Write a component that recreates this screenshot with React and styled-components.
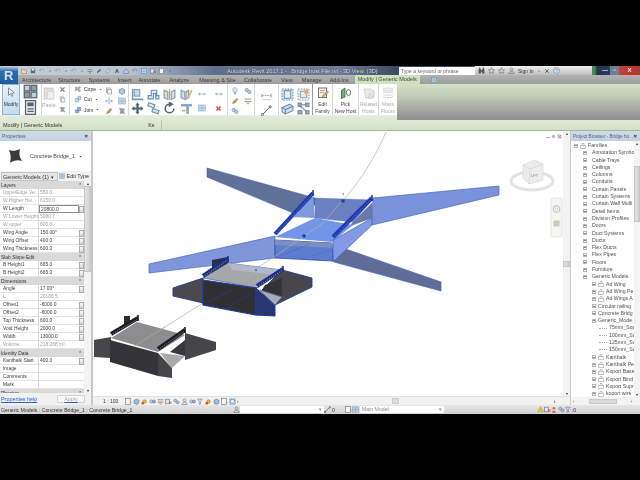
import React from 'react'
import styled, { createGlobalStyle } from 'styled-components'

const GlobalStyle = createGlobalStyle`
  html, body { margin: 0; background: #000; }
  * { box-sizing: border-box; }
`
const Screen = styled.div`
  width: 640px;
  height: 480px;
  overflow: hidden;
  background: #000;
  display: flex;
  flex-direction: column;
  font-family: 'Liberation Sans', Arial, sans-serif;
  font-size: 5.4px;
  color: #333;
  filter: blur(0.42px);
`
const TopBlack = styled.div`
  height: 66px;
  flex: none;
`
const TitleBar = styled.div`
  height: 9px;
  flex: none;
  display: flex;
  align-items: center;
  background: linear-gradient(90deg, #c6d0dc 0, #b7c3d2 130px, #5f708e 215px, #6b7d9b 340px, #3c4b63 397px);
`
const AppButton = styled.div`
  width: 18px;
  height: 18px;
  margin-bottom: -9px;
  position: relative;
  z-index: 2;
  flex: none;
  background: linear-gradient(#c4d0de, #2a6fb3 30%, #1d5d9e);
  color: #d6e4f2;
  font-weight: bold;
  font-size: 13px;
  line-height: 19px;
  padding-left: 4px;
`
const Qat = styled.div`
  display: flex;
  gap: 3px;
  align-items: center;
  padding-left: 3px;
  width: 200px;
  flex: none;
`
const WindowTitle = styled.div`
  width: 177px;
  flex: none;
  color: #e6e6e6;
  font-size: 5.6px;
  white-space: nowrap;
  text-shadow: 0 0 1px #111;
  padding-left: 9px;
`
const SearchBox = styled.div`
  width: 76px;
  height: 8px;
  margin-left: 4px;
  flex: none;
  background: #fff;
  color: #666;
  padding-left: 2px;
  line-height: 8px;
  font-size: 5px;
  white-space: nowrap;
  overflow: hidden;
`
const InfoCenter = styled.div`
  flex: 1;
  height: 9px;
  display: flex;
  align-items: center;
  gap: 3px;
  padding-left: 3px;
  background: linear-gradient(#efefef, #bdbdbd);
  font-size: 5px;
`
const WindowButtons = styled.div`
  width: 48px;
  height: 9px;
  flex: none;
  display: flex;
  align-items: center;
  background: linear-gradient(90deg, #4c8a52 0, #3d8a48 3px, #26324a 5px, #2f4468 26px);
`
const WinBtn = styled.div`
  width: ${({ $w }) => $w}px;
  height: 9px;
  flex: none;
  color: #fff;
  font-weight: bold;
  font-size: 6px;
  line-height: 9px;
  text-align: center;
  background: ${({ $bg }) => $bg};
`
const TabBar = styled.div`
  height: 9px;
  flex: none;
  display: flex;
  align-items: center;
  padding-left: 22px;
  background: linear-gradient(#b3b3b3, #9c9c9c);
`
const Tab = styled.div`
  white-space: nowrap;
  margin-right: ${({ $gap }) => $gap}px;
  color: #3b3b3b;
  font-size: 5.5px;
  ${({ $active }) =>
    $active &&
    `
    background: #cfe2bd;
    height: 9px;
    line-height: 9px;
    padding: 0 3px;
    border-radius: 1px 1px 0 0;
    color: #444;
  `}
`
const RibbonRow = styled.div`
  height: 36px;
  flex: none;
  display: flex;
  background: linear-gradient(#d3e1c5 0, #c3cfb8 30%, #a5a99f 70%, #8e8e8e 100%);
`
const Ribbon = styled.div`
  width: 397px;
  flex: none;
  display: flex;
  background: linear-gradient(#fff 0, #fff 86%, #e2ecd8 88%, #dfe9d5 100%);
  svg { opacity: 0.85; }
`
const Panel = styled.div`
  width: ${({ $w }) => $w}px;
  flex: none;
  height: 31px;
  display: flex;
  border-right: 1px solid ${({ $dark }) => ($dark ? '#9a9a9a' : '#d4d8d0')};
`
const ModifyButton = styled.div`
  width: 18px;
  height: 31px;
  margin-left: 2px;
  flex: none;
  background: linear-gradient(#e6f1fb, #c3dcf1);
  border: 1px solid #8fb4d6;
  display: flex;
  flex-direction: column;
  align-items: center;
  gap: 4px;
  padding-top: 2px;
  font-size: 5px;
  color: #333;
`
const StackColumn = styled.div`
  flex: ${({ $w }) => ($w ? `0 0 ${$w}px` : 1)};
  display: flex;
  flex-direction: column;
  align-items: center;
  justify-content: ${({ $justify }) => $justify || 'space-around'};
  padding: ${({ $pad }) => $pad || 0};
`
const PasteLabel = styled.span`
  color: #aaa;
  margin-top: 2px;
`
const LabelRow = styled.div`
  display: flex;
  align-items: center;
  gap: 2px;
  width: 100%;
  padding-left: 4px;
  white-space: nowrap;
  font-size: 5px;
`
const IconGrid = styled.div`
  display: grid;
  grid-template-columns: repeat(${({ $cols }) => $cols}, 1fr);
  grid-auto-rows: ${({ $row }) => $row}px;
  width: 100%;
  padding-top: ${({ $top }) => $top || 2}px;
  justify-items: center;
  align-items: center;
`
const BigTool = styled.div`
  flex: 1;
  height: 31px;
  display: flex;
  flex-direction: column;
  align-items: center;
  padding-top: 3px;
  gap: 2px;
  font-size: 5px;
  line-height: 6.5px;
  text-align: center;
  color: ${({ $off }) => ($off ? '#aaa' : '#444')};
`
const OptionsBar = styled.div`
  height: 11px;
  flex: none;
  display: flex;
  align-items: center;
  padding-left: 3px;
  background: linear-gradient(#dfe9d3, #d3e0c6);
  border-bottom: 1px solid #a9b3a0;
  font-size: 5.5px;
`
const OptionsValue = styled.span`
  margin-left: 86px;
  padding-right: 6px;
  border-right: 1px solid #b6c2a9;
  line-height: 10px;
`
const Workspace = styled.div`
  flex: none;
  height: 274px;
  display: flex;
  background: #fff;
`
const PropertiesPanel = styled.div`
  width: 93px;
  flex: none;
  display: flex;
  flex-direction: column;
  background: #f1f1f1;
  border-right: 2px solid #c8c8c8;
`
const PanelHeader = styled.div`
  height: 10px;
  flex: none;
  display: flex;
  align-items: center;
  justify-content: space-between;
  padding: 0 3px 0 2px;
  background: linear-gradient(#cfdbe8, #c3d2e2);
  color: #56667a;
  font-size: ${({ $size }) => $size || 5.2}px;
  white-space: nowrap;
  b { color: #222; font-size: 6px; }
`
const TypePreview = styled.div`
  height: 30px;
  flex: none;
  display: flex;
  align-items: center;
  background: #fff;
  padding-left: 3px;
  gap: 3px;
  color: #444;
  font-size: 5.4px;
`
const Swatch = styled.div`
  width: 24px;
  height: 24px;
  flex: none;
  display: flex;
  align-items: center;
  justify-content: center;
`
const SelectRow = styled.div`
  height: 10px;
  flex: none;
  display: flex;
  align-items: center;
  justify-content: space-between;
  padding: 0 2px 0 1px;
  background: #f2f2f2;
  font-size: 5.4px;
  color: #333;
`
const Combo = styled.div`
  width: 57px;
  height: 9px;
  line-height: 8px;
  background: #e6e6e6;
  border: 1px solid #c4c4c4;
  display: flex;
  justify-content: space-between;
  padding: 0 3px 0 1px;
  white-space: nowrap;
`
const TableArea = styled.div`
  height: 212px;
  flex: none;
  display: flex;
  overflow: hidden;
`
const Table = styled.div`
  width: 84px;
  flex: none;
  background: #fff;
  font-size: 4.9px;
`
const SectionRow = styled.div`
  height: 8px;
  background: #d9d9d9;
  display: flex;
  justify-content: space-between;
  align-items: center;
  padding: 0 2px 0 1px;
  color: #333;
`
const PropRow = styled.div`
  height: 8px;
  display: grid;
  grid-template-columns: 39px 40px 5px;
  align-items: center;
  border-bottom: 1px solid #e4e4e4;
  color: ${({ $muted }) => ($muted ? '#a2a2a2' : '#3c3c3c')};
  white-space: nowrap;
`
const PropLabel = styled.div`
  padding-left: 3px;
  height: 8px;
  line-height: 8px;
  border-right: 1px solid #d8d8d8;
`
const PropValue = styled.div`
  padding-left: 1px;
  height: 8px;
  line-height: 7px;
  ${({ $edit }) => $edit && 'border: 1px solid #8f8f8f; background: #fff;'}
`
const AssocBtn = styled.div`
  width: 5px;
  height: 7px;
  background: linear-gradient(#fafafa, #d6d6d6);
  border: 1px solid #adadad;
`
const VScroll = styled.div`
  width: ${({ $w }) => $w}px;
  flex: none;
  display: flex;
  flex-direction: column;
  justify-content: space-between;
  background: #f3f3f3;
  font-size: 4px;
  text-align: center;
  color: #333;
`
const ScrollThumb = styled.div`
  height: ${({ $h }) => $h}px;
  margin-top: ${({ $mt }) => $mt || 0}px;
  background: linear-gradient(90deg, #e4e4e4, #cfcfcf);
  border: 1px solid #c6c6c6;
`
const ScrollFill = styled.div`
  flex: 1;
`
const HelpRow = styled.div`
  height: 12px;
  flex: none;
  display: flex;
  justify-content: space-between;
  align-items: center;
  padding: 0 6px 0 1px;
  color: #2a62c4;
  text-decoration: underline;
`
const ApplyButton = styled.div`
  width: 28px;
  height: 8px;
  line-height: 7px;
  text-align: center;
  color: #a8a8a8;
  background: #f8f8f8;
  border: 1px solid #d2d2d2;
  border-radius: 1px;
`
const Viewport = styled.div`
  flex: 1;
  min-width: 0;
  display: flex;
  flex-direction: column;
`
const ViewportBody = styled.div`
  flex: 1;
  min-height: 0;
  display: flex;
`
const Scene = styled.svg`
  display: block;
  flex: none;
  width: 470px;
  height: 265px;
`
const ViewBar = styled.div`
  height: 9px;
  flex: none;
  display: flex;
  align-items: center;
  gap: 1px;
  padding: 0 6px 0 10px;
  background: #f1f1f1;
  font-size: 5px;
  border-top: 1px solid #e2e2e2;
`
const ScaleLabel = styled.span`
  width: 21px;
  flex: none;
`
const ViewThumb = styled.div`
  width: 7px;
  height: 6px;
  flex: none;
  margin: 0 154px 0 152px;
  background: #dcdcdc;
  border: 1px solid #cacaca;
`
const BrowserPanel = styled.div`
  width: 70px;
  flex: none;
  display: flex;
  flex-direction: column;
  background: #fff;
  border-left: 1px solid #c8c8c8;
`
const TreeArea = styled.div`
  height: 256px;
  flex: none;
  display: flex;
  overflow: hidden;
`
const Tree = styled.div`
  flex: 1;
  min-width: 0;
  padding-top: 1px;
  overflow: hidden;
`
const TREE_INDENT = [3, 12, 21, 28]
const TreeRow = styled.div`
  height: 7.3px;
  line-height: 7.3px;
  display: flex;
  align-items: center;
  gap: ${({ $level }) => ($level === 1 ? 5 : 2)}px;
  padding-left: ${({ $level }) => TREE_INDENT[$level]}px;
  white-space: nowrap;
  color: #505050;
  font-size: 5.2px;
`
const Expander = styled.span`
  width: 4px;
  height: 4px;
  flex: none;
  border: 1px solid #b5b5b5;
  background: #fff;
  position: relative;
  &::after {
    content: '';
    position: absolute;
    left: 0;
    right: 0;
    top: 0.5px;
    height: 1px;
    background: #8a8a8a;
  }
`
const TreeDots = styled.span`
  width: 8px;
  flex: none;
  border-bottom: 1px dotted #aaa;
`
const HScroll = styled.div`
  height: 8px;
  flex: none;
  display: flex;
  align-items: center;
  justify-content: space-between;
  padding: 0 8px 0 2px;
  background: #f3f3f3;
  font-size: 4px;
`
const HThumb = styled.div`
  width: 28px;
  height: 5px;
  background: #dcdcdc;
  border: 1px solid #c8c8c8;
`
const StatusBar = styled.div`
  height: 9px;
  flex: none;
  display: flex;
  align-items: center;
  padding-left: 1px;
  background: linear-gradient(#e6e6e6, #d2d2d2);
  font-size: 5.2px;
  color: #333;
  white-space: nowrap;
`
const StatusText = styled.div`
  width: 232px;
  flex: none;
`
const StatusCount = styled.span`
  margin: 0 10px 0 1px;
`
const StatusField = styled.div`
  width: ${({ $w }) => $w}px;
  height: 7px;
  flex: none;
  margin: 0 ${({ $mr }) => $mr || 0}px 0 ${({ $ml }) => $ml || 0}px;
  background: #fff;
  color: #8a8a8a;
  display: flex;
  justify-content: space-between;
  padding: 0 2px;
  line-height: 7px;
`
const IconSvg = styled.svg`
  flex: none;
  display: block;
  opacity: ${({ $muted }) => ($muted ? 0.7 : 1)};
`

const ICONS = {
  pointer: <path d="M3 1v9l2.4-2 1.6 3.4 1.3-.6L6.8 7.5 10 7z" fill="#fff" stroke="#5a6f8c" />,
  props: (
    <g stroke="#3d4a55" fill="#b9c6d4">
      <rect x="1" y="1" width="4.5" height="4.5" />
      <rect x="6.5" y="1" width="4.5" height="4.5" fill="#7b8a99" />
      <rect x="1" y="6.5" width="4.5" height="4.5" fill="#7b8a99" />
      <rect x="6.5" y="6.5" width="4.5" height="4.5" />
    </g>
  ),
  typeProps: (
    <g>
      <rect x="2" y="0.5" width="8" height="11" fill="#dfe6ee" stroke="#3e4b58" />
      <rect x="3.5" y="2" width="5" height="3" fill="#3e4b58" />
      <path d="M3.5 7h5M3.5 9h5" stroke="#3e4b58" />
    </g>
  ),
  paste: (
    <g>
      <rect x="2" y="1" width="8" height="10" fill="#dcdcdc" stroke="#c2c2c2" />
      <rect x="5" y="4" width="6" height="7" fill="#efefef" stroke="#cfcfcf" />
    </g>
  ),
  cross: <path d="M2.5 2.5l7 7M9.5 2.5l-7 7" stroke="#5f6870" strokeWidth="2" />,
  redCross: <path d="M2.5 2.5l7 7M9.5 2.5l-7 7" stroke="#d6322a" strokeWidth="2.6" />,
  copy: (
    <g fill="#e9eef3" stroke="#7c8a96">
      <rect x="2" y="1.5" width="6" height="7" />
      <rect x="4" y="3.5" width="6" height="7" />
    </g>
  ),
  brush: <path d="M2 2l8 1-2 3 2 4-4-1-3 1 1-4z" fill="#8a8f96" stroke="#5b5f64" strokeWidth=".6" />,
  cope: <path d="M2 3l4 1 3-2 1 2-3 2 3 3-2 1-3-3-3 2z" fill="#9aa6b2" stroke="#5b6670" strokeWidth=".6" />,
  cut: <path d="M2 5h5v5H2zM6 2h4v5H6z" fill="#c6d8ea" stroke="#6c8aa8" />,
  join: <path d="M2 6h5v4H2zM5 2h5v5H5z" fill="#7fa6cf" stroke="#4e78a4" />,
  align: (
    <g>
      <path d="M1.5 1v10M1.5 10.5h10" stroke="#4f87b8" strokeWidth="1.4" />
      <rect x="3" y="1.5" width="5" height="6" fill="#bed2e6" stroke="#6d8fae" />
    </g>
  ),
  offset: <path d="M1 10V7h3V2h5v5h2v3h-3V5H6v5z" fill="#d6e3ef" stroke="#4f7da8" />,
  mirror: (
    <g stroke="#6b879f" fill="#c9d8e6">
      <path d="M1 2l3.5 1.5v7L1 9z" />
      <path d="M11 2L7.5 3.5v7L11 9z" />
      <path d="M6 1v10" stroke="#d88d2e" />
    </g>
  ),
  mirrorDraw: (
    <g stroke="#6b879f" fill="#c9d8e6">
      <path d="M1 2l3.5 1.5v7L1 9z" />
      <path d="M8 2L5.5 3.5v7L8 9z" />
      <path d="M11 2L7 10" stroke="#d8a82e" strokeWidth="1.4" />
    </g>
  ),
  move: <path d="M6 .5L8 3H7v2h2V4l2.5 2L9 8V7H7v2h1l-2 2.5L4 9h1V7H3v1L.5 6 3 4v1h2V3H4z" fill="#33475a" />,
  copyShape: (
    <g fill="#d6e3ef" stroke="#4f7da8">
      <rect x="1" y="1.5" width="6" height="3" transform="rotate(20 4 3)" />
      <rect x="5" y="7" width="6" height="3" transform="rotate(20 8 8)" />
    </g>
  ),
  rotate: <path d="M6 2a4 4 0 1 0 4 4M6 .5v3L8.5 2z" fill="none" stroke="#33475a" strokeWidth="1.4" />,
  trim: (
    <g>
      <path d="M1 3h10" stroke="#6f99c0" strokeWidth="2.4" />
      <path d="M7 3v8" stroke="#6f99c0" strokeWidth="2.4" />
      <path d="M2 8h3" stroke="#d09233" strokeWidth="1.4" />
    </g>
  ),
  arrows: <path d="M1 6h10M3 4L1 6l2 2M9 4l2 2-2 2" fill="none" stroke="#4f87b8" />,
  gridBlue: (
    <g fill="#bcd3e8" stroke="#6d93b5" strokeWidth=".8">
      <rect x="1" y="1.5" width="10" height="9" />
      <path d="M1 6h10M6 1.5v9" />
    </g>
  ),
  split: <path d="M1 6h3M8 6h3M6 1v10M2.5 4L1 6l1.5 2M9.5 4L11 6 9.5 8" fill="none" stroke="#4a6e90" />,
  bulb: (
    <g>
      <circle cx="6" cy="4.5" r="3.5" fill="#cfe4f5" stroke="#6f9dc2" />
      <rect x="4.5" y="8" width="3" height="3" fill="#8a99a6" />
    </g>
  ),
  paint: <path d="M2 10l2-4 5-4 1.5 1.5-4 5z" fill="#c58a3c" stroke="#7a5326" strokeWidth=".6" />,
  link: (
    <g fill="#b5c8da" stroke="#587a9a">
      <circle cx="4" cy="4.5" r="2.5" />
      <circle cx="8" cy="7.5" r="2.5" />
    </g>
  ),
  bars: (
    <g stroke="#4b5b6a">
      <path d="M1 3h10" />
      <path d="M1 7h10" stroke="#c46a3a" strokeWidth="1.6" />
      <path d="M4 10h4" />
    </g>
  ),
  dim: (
    <g stroke="#7d8994">
      <path d="M1 3v4M11 3v4" />
      <path d="M1 5h10" strokeDasharray="2 1" />
      <path d="M1 9.5h10" stroke="#bfc6cc" />
    </g>
  ),
  angle: (
    <g stroke="#39424a">
      <path d="M1 11L10 2" />
      <circle cx="1.5" cy="10.5" r="1.2" fill="#fff" />
      <circle cx="10" cy="2" r="1.2" fill="#fff" />
    </g>
  ),
  boxWire: (
    <g stroke="#4f7da8" fill="#e3edf6">
      <rect x="1" y="1" width="10" height="10" strokeDasharray="1.5 1" />
      <rect x="3" y="2.5" width="6" height="7" />
    </g>
  ),
  boxPaint: (
    <g>
      <rect x="1" y="1" width="10" height="10" fill="none" stroke="#7c8a96" strokeDasharray="1.5 1" />
      <rect x="3" y="3" width="6" height="6" fill="#dfe9f2" stroke="#6d8fae" />
      <circle cx="8.5" cy="3.5" r="2" fill="#e39b3c" />
    </g>
  ),
  cylinder: (
    <g stroke="#4f7da8" fill="#c8dbec">
      <path d="M1 5l7-3 3 2-7 3zM1 5v4l3 2V7zM4 7v4l7-3V4z" />
    </g>
  ),
  nodes: (
    <g stroke="#5a6f8c" fill="#88a8c8">
      <rect x="1" y="1" width="3" height="3" />
      <rect x="8" y="1" width="3" height="3" />
      <rect x="1" y="8" width="3.5" height="3" />
      <rect x="8" y="8" width="3" height="3" fill="#d8a23c" />
      <path d="M4 2.5h4M3 4l5 4" fill="none" />
    </g>
  ),
  family: (
    <g>
      <rect x="1.5" y="1" width="8" height="9.5" fill="#f4efe2" stroke="#5f5f5f" />
      <path d="M3 3.5h5M3 5.5h4" stroke="#9a9a9a" />
      <path d="M5 11l1-3 4.5-4 1 1.2L7 9.5z" fill="#d6a23c" stroke="#7c5b20" strokeWidth=".5" />
    </g>
  ),
  host: (
    <g>
      <path d="M1.5 3.5L5 1v9l-3.5 1.500z" fill="#5aa35a" stroke="#2f6d33" />
      <ellipse cx="8.5" cy="5.5" rx="2.2" ry="3" fill="#fff" stroke="#555" />
    </g>
  ),
  hostOff: (
    <g fill="#e6e6e6" stroke="#cacaca">
      <path d="M1 2h7l3 2v6l-3 1H3z" />
      <path d="M7 6l3 5H5z" />
    </g>
  ),
  massOff: (
    <g fill="#efefef" stroke="#cacaca">
      <ellipse cx="6" cy="2.5" rx="5" ry="1.6" />
      <path d="M1 4.5c1 1.6 9 1.6 10 0M1 7c1 1.6 9 1.6 10 0M1 9.5c1 1.6 9 1.6 10 0" fill="none" />
    </g>
  ),
  open: <path d="M1 3h4l1 1h5v7H1z" fill="#e9d9a8" stroke="#8a7a48" />,
  familyNode: (
    <g fill="none" stroke="#8a8a8a">
      <path d="M1 11V5h3V1h4v4h3v6z" />
      <path d="M4 5h4" />
    </g>
  ),
  save: (
    <g>
      <rect x="1.5" y="1.5" width="9" height="9" fill="#5c6f86" />
      <rect x="3.5" y="2" width="5" height="3" fill="#e8edf2" />
    </g>
  ),
  undo: <path d="M2 6a4 4 0 0 1 8 0M2 6l-1-2.5M2 6l2.500-.8" fill="none" stroke="#5c6f86" />,
  text: <text x="2" y="10" fontSize="11" fontWeight="bold" fill="#2f3a45" fontFamily="Liberation Sans">A</text>,
  pencil: <path d="M2 10l1-3 5-5 2 2-5 5z" fill="#4d5a67" />,
  ruler: <path d="M1 8l7-7 3 3-7 7z" fill="#d9d9d9" stroke="#5c6f86" />,
  sky: <path d="M1 6l5-4 5 4v5H1z" fill="#a9c8e4" stroke="#5c6f86" />,
  thin: (
    <g>
      <rect x="1" y="1" width="10" height="10" fill="#dce9f6" stroke="#3f79c0" />
      <path d="M3 4h6M3 6h6M3 8h6" stroke="#3f79c0" />
    </g>
  ),
  closeDoc: (
    <g>
      <rect x="1" y="2" width="7" height="8" fill="#dfe6ee" stroke="#5c6f86" />
      <path d="M7 6l4 4M11 6l-4 4" stroke="#cc3a30" strokeWidth="1.4" />
    </g>
  ),
  sheet: (
    <g>
      <rect x="1" y="1" width="8" height="10" fill="#f3f3f3" stroke="#5c6f86" />
      <path d="M9 6l2 2-2 2" fill="none" stroke="#c67a2a" />
    </g>
  ),
  binoc: <path d="M1 4h4v7H1zM7 4h4v7H7zM2 1h2v3H2zM8 1h2v3H8zM5 5h2v3H5z" fill="#4b5660" />,
  star: <path d="M6 1l1.5 3.6 3.8.3-2.9 2.5.9 3.7L6 9.2l-3.3 1.9.9-3.7L.7 4.9l3.8-.3z" fill="none" stroke="#5c6670" />,
  user: <path d="M6 1.5a2.4 2.4 0 1 1-.01 0M1.5 11c.6-3 2.4-4 4.5-4s3.9 1 4.5 4z" fill="none" stroke="#5c6670" />,
  help: (
    <g>
      <circle cx="6" cy="6" r="5" fill="#dbe6f2" stroke="#4d78a8" />
      <text x="3.8" y="9" fontSize="7.5" fontFamily="Liberation Sans" fill="#2e5684">?</text>
    </g>
  ),
  arrowDown: <path d="M3.5 5h5L6 8z" fill="#333" />,
  cube: (
    <g stroke="#486a8c" fill="#9cc0e0">
      <path d="M2 4l4-2 4 2v5l-4 2-4-2z" />
    </g>
  ),
  sun: (
    <g>
      <circle cx="6" cy="6" r="3" fill="#f0b52e" stroke="#b7741a" />
      <rect x="1" y="7" width="4" height="4" fill="#d24a36" />
    </g>
  ),
  glasses: (
    <g stroke="#5a6f8c" fill="#c6d8ea">
      <circle cx="4" cy="6" r="2.6" />
      <circle cx="8.5" cy="6" r="2.6" fill="#9eb4c9" />
    </g>
  ),
  filter: <path d="M1 2h8L6 6v4L4 11V6z" fill="none" stroke="#5a6f8c" />,
  warn: <path d="M6 1l5 9H1z" fill="#e7c33c" stroke="#a68420" strokeWidth=".6" />,
  peopleRed: (
    <g>
      <circle cx="5" cy="4" r="2.5" fill="#d97a2e" />
      <path d="M2 11c0-3 6-3 6 0z" fill="#c64a34" />
    </g>
  ),
}

const Icon = ({ name, size = 10, muted }) => (
  <IconSvg width={size} height={size} viewBox="0 0 12 12" $muted={muted}>
    {ICONS[name]}
  </IconSvg>
)

const SmallLabel = ({ name, children }) => (
  <LabelRow>
    <Icon name={name} size={8} />
    {children}
    <Icon name="arrowDown" size={5} />
  </LabelRow>
)

const TABS = [
  ['Architecture', 7],
  ['Structure', 8],
  ['Systems', 8],
  ['Insert', 7],
  ['Annotate', 9],
  ['Analyze', 10],
  ['Massing & Site', 8],
  ['Collaborate', 9],
  ['View', 9],
  ['Manage', 8],
  ['Add-Ins', 6],
]

const PROPS = [
  { section: 'Layers' },
  { label: 'UpperEdge Ve...', value: '550.0', muted: true },
  { label: 'W Higher Hei...', value: '6150.0', muted: true },
  { label: 'W Length', value: '20800.0', edit: true, btn: true },
  { label: 'W Lower Height', value: '5080.7', muted: true },
  { label: 'W upper', value: '600.0', muted: true },
  { label: 'Wing Angle', value: '150.00°', btn: true },
  { label: 'Wing Offset', value: '400.0', btn: true },
  { label: 'Wing Thickness', value: '600.0', btn: true },
  { section: 'Slab Slope Edit' },
  { label: 'B Height1', value: '665.0', btn: true },
  { label: 'B Height2', value: '665.0', btn: true },
  { section: 'Dimensions' },
  { label: 'Angle', value: '17.00°', btn: true },
  { label: 'L', value: '20186.5', muted: true },
  { label: 'Offset1', value: '-6000.0', btn: true },
  { label: 'Offset2', value: '-6000.0', btn: true },
  { label: 'Top Thickness', value: '600.0', btn: true },
  { label: 'Void Height', value: '2000.0', btn: true },
  { label: 'Width', value: '13000.0', btn: true },
  { label: 'Volume', value: '218.288 m³', muted: true },
  { section: 'Identity Data' },
  { label: 'Kantbalk Start', value: '400.0', btn: true },
  { label: 'Image', value: '' },
  { label: 'Comments', value: '' },
  { label: 'Mark', value: '' },
  { section: 'Phasing' },
]

const BROWSER = [
  { level: 0, text: 'Families', family: true },
  ...[
    'Annotation Symbo',
    'Cable Trays',
    'Ceilings',
    'Columns',
    'Conduits',
    'Curtain Panels',
    'Curtain Systems',
    'Curtain Wall Mulli',
    'Detail Items',
    'Division Profiles',
    'Doors',
    'Duct Systems',
    'Ducts',
    'Flex Ducts',
    'Flex Pipes',
    'Floors',
    'Furniture',
    'Generic Models',
  ].map((text) => ({ level: 1, text })),
  { level: 2, text: 'Ad Wing', family: true },
  { level: 2, text: 'Ad Wing Pe', family: true },
  { level: 2, text: 'Ad Wings A', family: true },
  { level: 2, text: 'Circular railing' },
  { level: 2, text: 'Concrete Bridg' },
  { level: 2, text: 'Generic_Mode' },
  { level: 3, text: '75mm_Squ', leaf: true },
  { level: 3, text: '100mm_Sq', leaf: true },
  { level: 3, text: '125mm_Sq', leaf: true },
  { level: 3, text: '150mm_Sq', leaf: true },
  { level: 2, text: 'Kantbalk', family: true },
  { level: 2, text: 'Kantbalk Pe', family: true },
  { level: 2, text: 'Koport Base', family: true },
  { level: 2, text: 'Koport Bind', family: true },
  { level: 2, text: 'Koport Supr', family: true },
  { level: 2, text: 'koport wire', family: true },
]

const VIEW_ICONS = ['sheet', 'cube', 'sun', 'glasses', 'bars', 'closeDoc', 'link', 'user', 'glasses', 'filter', 'sun', 'cube', 'sheet', 'boxWire']

// railing along a bridge edge: solid band with light ticks on top
const Rail = ({ x1, y1, x2, y2, color, tick = '#7f95dc' }) => (
  <g>
    <line x1={x1} y1={y1} x2={x2} y2={y2} stroke={color} strokeWidth="4" />
    <line x1={x1} y1={y1 + 0.8} x2={x2} y2={y2 + 0.8} stroke={tick} strokeWidth="0.8" strokeDasharray="1 1.4" />
    <line x1={x2} y1={y2 - 3} x2={x2} y2={y2 + 3} stroke={color} strokeWidth="1.6" />
  </g>
)

const BridgeScene = () => (
  <Scene viewBox="93 131 470 265">
    <rect x="93" y="131" width="470" height="265" fill="#fff" />

    {/* upper selected bridge */}
    <polygon points="207,168 315,198 315,205 293,213 207,177" fill="#5f7099" stroke="#4a62b4" strokeWidth=".6" />
    <polygon points="149,264 275,236 275,258 149,273" fill="#7f96da" stroke="#4a66c4" strokeWidth=".7" />
    <polygon points="373,198 499,186 499,195 372,225" fill="#7a92da" stroke="#4a66c4" strokeWidth=".7" />
    <polygon points="337,246 441,282 441,291 334,262" fill="#5f6d96" stroke="#4a66c4" strokeWidth=".7" />
    <polygon points="315,198 372,200 353,222 315,218" fill="#6a80c0" stroke="#5a76cc" strokeWidth=".5" />
    <polygon points="353,222 372,203 372,218 350,226" fill="#6a7aa8" stroke="#4a66c4" strokeWidth=".4" />
    <polygon points="275,237 313,196 315,218 292,217" fill="#8098dc" />
    <polygon points="275,237 315,218 353,225 332,242" fill="#7295ea" />
    <polygon points="333,240 372,218 372,225 333,262" fill="#829ae4" stroke="#3a58b8" strokeWidth=".6" />
    <polygon points="275,240 332,243 333,261 275,258" fill="#5e7cd0" stroke="#2c47a8" strokeWidth=".8" />
    <polygon points="275,240 332,243 332,248 275,245" fill="#7c8ec0" />
    <path d="M275,258 L310,244 M300,259 L333,250" stroke="#4a68c0" strokeWidth=".5" />
    <Rail x1={275} y1={234} x2={313} y2={193} color="#1f3ab0" />
    <Rail x1={333} y1={237} x2={372} y2={198} color="#1f3ab0" />

    {/* axis curve */}
    <path d="M133,347 L200,305 L277,255 L323,223 L343,200 C360,182 376,156 386,132" fill="none" stroke="#a6b8a0" strokeWidth=".7" />

    {/* middle bridge */}
    <polygon points="212,260 228,257 228,266 212,275" fill="#24304c" />
    <polygon points="173,288 203,278 203,303 173,296" fill="#4a4a4e" stroke="#233a9c" strokeWidth=".9" />
    <polygon points="282,270 312,278 312,287 275,305 262,290" fill="#47474b" stroke="#233a9c" strokeWidth=".9" />
    <polygon points="203,278 228,263 282,270 257,288" fill="#a6a7ab" stroke="#3a52a8" strokeWidth=".6" />
    <polygon points="228,263 282,270 278,275 232,270" fill="#b2b9cc" />
    <polygon points="203,280 256,288 256,315 203,305" fill="#303034" stroke="#1f3aa0" strokeWidth="1.2" />
    <path d="M203,305 L232,290 M225,310 L252,292" stroke="#24409c" strokeWidth=".6" />
    <polygon points="256,288 275,305 275,316 256,315" fill="#2a3670" stroke="#1f3aa0" strokeWidth="1" />
    <polygon points="260,290 282,297 275,305" fill="#a7aab8" stroke="#3a52a8" strokeWidth=".5" />
    <polygon points="265,285 282,278 282,296 262,290" fill="#333336" />
    <Rail x1={203} y1={276} x2={228} y2={259} color="#1c2f80" tick="#b8c0dc" />
    <Rail x1={257} y1={286} x2={283} y2={269} color="#1c2f80" tick="#b8c0dc" />

    {/* lower bridge */}
    <polygon points="94,340 111,337 111,358 94,357" fill="#47474a" />
    <polygon points="185,333 216,342 216,350 185,360" fill="#45454a" />
    <polygon points="111,338 137,322 185,335 158,352" fill="#8d8d8f" />
    <polygon points="110,340 158,353 158,376 110,362" fill="#343436" />
    <polygon points="158,353 172,368 172,378 158,376" fill="#454547" />
    <polygon points="160,353 185,356 172,368" fill="#a9a9aa" />
    <polygon points="185,340 185,356 170,352" fill="#38383a" />
    <rect x="124" y="316" width="6" height="9" fill="#2a2a2c" />
    <Rail x1={111} y1={334} x2={138} y2={318} color="#1c1c20" tick="#bdbdbd" />
    <Rail x1={158} y1={349} x2={185} y2={330} color="#1c1c20" tick="#bdbdbd" />
    <line x1="133" y1="347" x2="165" y2="327" stroke="#a6b8a0" strokeWidth=".6" />

    {/* grips */}
    <circle cx="343" cy="201" r="1.8" fill="#1f3aa0" />
    <circle cx="304" cy="236" r="1.8" fill="#1f3aa0" />
    <circle cx="256" cy="270" r="1.2" fill="#5a78d0" />
    <text x="342" y="196" fontSize="4" fill="#444" fontFamily="Liberation Sans">?</text>

    {/* view cube */}
    <ellipse cx="532" cy="181" rx="21" ry="9" fill="none" stroke="#e2e2e2" strokeWidth="3" />
    <polygon points="523,165 535,160 543,164 543,180 529,184 523,178" fill="#ececec" stroke="#c9c9c9" strokeWidth=".5" />
    <path d="M523,165 L530,169 L543,164 M530,169 L529,184" fill="none" stroke="#c6c6c6" strokeWidth=".5" />
    <text x="531" y="177" fontSize="4" fill="#888" fontFamily="Liberation Sans">LFT</text>

    {/* navigation bar */}
    <rect x="551" y="198" width="11" height="39" rx="1.5" fill="#f4f6f0" stroke="#dcdcdc" strokeWidth=".7" />
    <circle cx="556.5" cy="209" r="3.4" fill="none" stroke="#bdbdbd" strokeWidth="1" />
    <circle cx="556.5" cy="209" r="1.4" fill="none" stroke="#c8c8c8" strokeWidth=".7" />
    <rect x="554" y="221" width="5" height="5" fill="#c7d5bf" stroke="#9eb094" strokeWidth=".5" />

    {/* viewport window controls */}
    <path d="M546,137.5h4" stroke="#999" strokeWidth=".8" />
    <circle cx="553.5" cy="136.5" r="1.8" fill="#bbb" />
    <path d="M558,135h3v3h-3zM558,135l3,3M561,135l-3,3" fill="none" stroke="#888" strokeWidth=".6" />
  </Scene>
)

const App = () => (
  <Screen>
    <GlobalStyle />
    <TopBlack />
    <TitleBar>
      <AppButton>R</AppButton>
      <Qat>
        <Icon name="open" size={6} />
        <Icon name="save" size={6} />
        <Icon name="undo" size={6} muted />
        <Icon name="arrowDown" size={4} />
        <Icon name="undo" size={6} muted />
        <Icon name="arrowDown" size={4} />
        <Icon name="undo" size={6} muted />
        <Icon name="arrowDown" size={4} />
        <Icon name="bars" size={6} />
        <Icon name="pencil" size={6} />
        <Icon name="ruler" size={6} />
        <Icon name="text" size={6} />
        <Icon name="sky" size={6} />
        <Icon name="undo" size={6} />
        <Icon name="thin" size={6} />
        <Icon name="closeDoc" size={6} />
        <Icon name="sheet" size={6} />
        <Icon name="arrowDown" size={4} />
      </Qat>
      <WindowTitle>Autodesk Revit 2017.1 -&nbsp;&nbsp; Bridge host File.rvt - 3D View: {'{3D}'}</WindowTitle>
      <SearchBox>Type a keyword or phrase</SearchBox>
      <InfoCenter>
        <Icon name="binoc" size={7} />
        <Icon name="star" size={7} />
        <Icon name="star" size={7} />
        <Icon name="user" size={7} />
        <span>Sign In</span>
        <Icon name="arrowDown" size={4} />
        <Icon name="cross" size={6} />
        <Icon name="help" size={7} />
      </InfoCenter>
      <WindowButtons>
        <WinBtn $w={8} $bg="transparent" />
        <WinBtn $w={10} $bg="transparent">—</WinBtn>
        <WinBtn $w={9} $bg="#6b7f9a">▫</WinBtn>
        <WinBtn $w={21} $bg="linear-gradient(90deg,#b84640,#c9322a,#a83a36)">X</WinBtn>
      </WindowButtons>
    </TitleBar>
    <TabBar>
      {TABS.map(([name, gap]) => (
        <Tab key={name} $gap={gap}>{name}</Tab>
      ))}
      <Tab $active $gap={11}>Modify | Generic Models</Tab>
      <Icon name="thin" size={6} muted />
    </TabBar>
    <RibbonRow>
      <Ribbon>
        <Panel $w={42}>
          <ModifyButton>
            <Icon name="pointer" size={10} />
            Modify
          </ModifyButton>
          <StackColumn>
            <Icon name="props" size={15} />
            <Icon name="typeProps" size={15} />
          </StackColumn>
        </Panel>
        <Panel $w={28}>
          <StackColumn $justify="flex-start" $pad="3px 0 0">
            <Icon name="paste" size={13} muted />
            <PasteLabel>Paste</PasteLabel>
          </StackColumn>
          <StackColumn>
            <Icon name="cross" size={7} />
            <Icon name="copy" size={7} />
            <Icon name="brush" size={7} />
          </StackColumn>
        </Panel>
        <Panel $w={59}>
          <StackColumn $w={32}>
            <SmallLabel name="cope">Cope</SmallLabel>
            <SmallLabel name="cut">Cut</SmallLabel>
            <SmallLabel name="join">Join</SmallLabel>
          </StackColumn>
          <IconGrid $cols={2} $row={10}>
            <Icon name="copy" size={8} muted />
            <Icon name="cube" size={8} />
            <Icon name="split" size={8} />
            <Icon name="gridBlue" size={8} />
            <Icon name="paint" size={8} />
            <Icon name="brush" size={8} />
          </IconGrid>
        </Panel>
        <Panel $w={99}>
          <IconGrid $cols={6} $row={14} $top={3}>
            <Icon name="align" size={13} />
            <Icon name="offset" size={13} />
            <Icon name="mirror" size={13} />
            <Icon name="mirrorDraw" size={13} />
            <Icon name="arrows" size={8} />
            <Icon name="arrows" size={8} />
            <Icon name="move" size={13} />
            <Icon name="copyShape" size={13} />
            <Icon name="rotate" size={13} />
            <Icon name="trim" size={13} />
            <Icon name="gridBlue" size={8} />
            <Icon name="redCross" size={7} />
          </IconGrid>
        </Panel>
        <Panel $w={27}>
          <IconGrid $cols={2} $row={10}>
            <Icon name="bulb" size={8} />
            <Icon name="link" size={8} />
            <Icon name="paint" size={8} />
            <Icon name="bars" size={8} />
            <Icon name="link" size={8} />
            <span />
          </IconGrid>
        </Panel>
        <Panel $w={24}>
          <IconGrid $cols={1} $row={14} $top={5}>
            <Icon name="dim" size={11} />
            <Icon name="angle" size={11} />
          </IconGrid>
        </Panel>
        <Panel $w={34} $dark>
          <IconGrid $cols={2} $row={14} $top={3}>
            <Icon name="boxWire" size={13} />
            <Icon name="boxPaint" size={13} />
            <Icon name="cylinder" size={13} />
            <Icon name="nodes" size={13} />
          </IconGrid>
        </Panel>
        <Panel $w={20}>
          <BigTool>
            <Icon name="family" size={12} />
            <span>Edit<br />Family</span>
          </BigTool>
        </Panel>
        <Panel $w={26}>
          <BigTool>
            <Icon name="host" size={12} />
            <span>Pick<br />New Host</span>
          </BigTool>
        </Panel>
        <Panel $w={20}>
          <BigTool $off>
            <Icon name="hostOff" size={12} />
            <span>Related<br />Hosts</span>
          </BigTool>
        </Panel>
        <BigTool $off>
          <Icon name="massOff" size={12} />
          <span>Mass<br />Floors</span>
        </BigTool>
      </Ribbon>
    </RibbonRow>
    <OptionsBar>
      Modify | Generic Models
      <OptionsValue>Ks</OptionsValue>
    </OptionsBar>
    <Workspace>
      <PropertiesPanel>
        <PanelHeader>
          Properties
          <b>×</b>
        </PanelHeader>
        <TypePreview>
          <Swatch>
            <svg width="16" height="16" viewBox="0 0 16 16">
              <path d="M2 2c3 1.4 7 1 11-1-1 4-1 7 2 12-4-1.500-8-1-12 2 1-4 1-9-1-13z" fill="#3a3a3a" />
            </svg>
          </Swatch>
          Concrete Bridge_1
          <Icon name="arrowDown" size={5} />
        </TypePreview>
        <SelectRow>
          <Combo>
            Generic Models (1)
            <span>▾</span>
          </Combo>
          <Icon name="gridBlue" size={6} />
          Edit Type
        </SelectRow>
        <TableArea>
          <Table>
            {PROPS.map((row) =>
              row.section ? (
                <SectionRow key={row.section}>
                  {row.section}
                  <span>⌃</span>
                </SectionRow>
              ) : (
                <PropRow key={row.label} $muted={row.muted}>
                  <PropLabel>{row.label}</PropLabel>
                  <PropValue $edit={row.edit}>{row.value}</PropValue>
                  {row.btn ? <AssocBtn /> : <span />}
                </PropRow>
              ),
            )}
          </Table>
          <VScroll $w={7}>
            <div>▴</div>
            <ScrollThumb $h={86} />
            <ScrollFill />
            <div>▾</div>
          </VScroll>
        </TableArea>
        <HelpRow>
          Properties help
          <ApplyButton>Apply</ApplyButton>
        </HelpRow>
      </PropertiesPanel>
      <Viewport>
        <ViewportBody>
          <BridgeScene />
          <VScroll $w={7}>
            <div>▴</div>
            <ScrollThumb $h={6} />
            <div>▾</div>
          </VScroll>
        </ViewportBody>
        <ViewBar>
          <ScaleLabel>1 : 100</ScaleLabel>
          {VIEW_ICONS.map((name, i) => (
            <Icon key={i} name={name} size={7} />
          ))}
          <span>‹</span>
          <ViewThumb />
          <span>›</span>
        </ViewBar>
      </Viewport>
      <BrowserPanel>
        <PanelHeader $size={4.6}>
          Project Browser - Bridge ho...
          <b>×</b>
        </PanelHeader>
        <TreeArea>
          <Tree>
            {BROWSER.map((row) => (
              <TreeRow key={row.text} $level={row.level}>
                {row.leaf ? <TreeDots /> : <Expander />}
                {row.family && <Icon name="familyNode" size={6} />}
                {row.text}
              </TreeRow>
            ))}
          </Tree>
          <VScroll $w={6}>
            <div>▴</div>
            <ScrollThumb $h={56} $mt={20} />
            <ScrollFill />
            <div>▾</div>
          </VScroll>
        </TreeArea>
        <HScroll>
          <span>‹</span>
          <HThumb />
          <span>›</span>
        </HScroll>
      </BrowserPanel>
    </Workspace>
    <StatusBar>
      <StatusText>Generic Models : Concrete Bridge_1 : Concrete Bridge_1</StatusText>
      <Icon name="user" size={7} />
      <StatusField $w={84}>
        <span />
        <span>▾</span>
      </StatusField>
      <Icon name="angle" size={7} />
      <StatusCount>0</StatusCount>
      <Icon name="sheet" size={7} />
      <Icon name="gridBlue" size={7} />
      <StatusField $w={84} $ml={1} $mr={93}>
        Main Model
        <span>▾</span>
      </StatusField>
      <Icon name="warn" size={7} />
      <Icon name="closeDoc" size={7} />
      <Icon name="peopleRed" size={7} />
      <Icon name="link" size={7} />
      <Icon name="filter" size={7} />
      <span>:0</span>
    </StatusBar>
  </Screen>
)

export default App
